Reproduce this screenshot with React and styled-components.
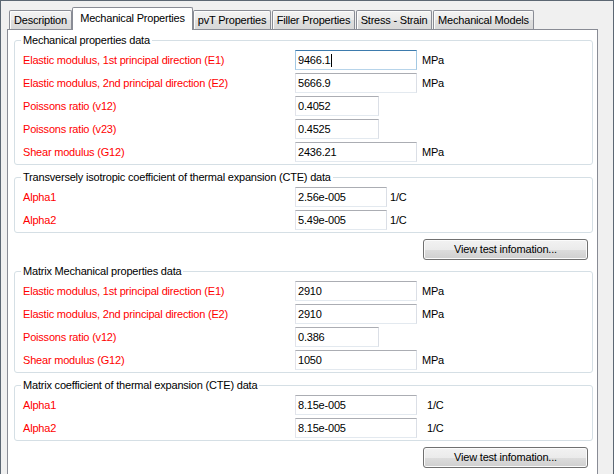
import React from "react";
import styled, { createGlobalStyle } from "styled-components";

const GlobalStyle = createGlobalStyle`
  html, body {
    margin: 0;
    padding: 0;
    background: #f0f0f0;
  }
  body {
    font-family: "Liberation Sans", Arial, sans-serif;
    font-size: 11px;
    letter-spacing: -0.2px;
    color: #000;
  }
`;

const Window = styled.div`
  width: 614px;
  height: 474px;
  box-sizing: border-box;
  border: 1px solid #5c6773;
  border-bottom: none;
  padding: 0 15px 0 6px;
  background: #f0f0f0;
  overflow: hidden;
`;

const TabBar = styled.div`
  display: flex;
  align-items: flex-end;
  height: 28px;
  padding-left: 2px;
  position: relative;
  z-index: 1;
`;

const Tab = styled.div`
  box-sizing: border-box;
  width: ${({ $w }) => $w}px;
  margin-left: ${({ $ml }) => $ml || 0}px;
  height: ${({ $active }) => ($active ? 23 : 19)}px;
  margin-bottom: ${({ $active }) => ($active ? -1 : 0)}px;
  border: 1px solid #898c95;
  border-bottom: none;
  border-radius: 2px 2px 0 0;
  background: ${({ $active }) =>
    $active ? "#ffffff" : "linear-gradient(#f3f3f3, #ebebeb 50%, #dedede 51%, #d8d8d8)"};
  box-shadow: ${({ $active }) => ($active ? "none" : "inset 1px 1px 0 #fcfcfc")};
  text-align: center;
  line-height: ${({ $active }) => ($active ? 20 : 18)}px;
  white-space: nowrap;
  color: #000;
`;

const Panel = styled.div`
  box-sizing: border-box;
  height: 460px;
  border: 1px solid #898c95;
  background: #ffffff;
  padding: 4px 4px 0 6px;
  display: flex;
  flex-direction: column;
`;

const Group = styled.fieldset`
  margin: ${({ $mt }) => $mt || 0}px 0 0 0;
  border: 1px solid #d5dfe5;
  border-radius: 3px;
  padding: 3px 0 2px 8px;
  min-width: 0;
`;

const Legend = styled.legend`
  padding: 0 2px;
  margin-left: -2px;
  line-height: 13px;
  height: 13px;
  color: #000;
`;

const Rows = styled.div`
  display: flex;
  flex-direction: column;
  gap: 3px;
`;

const Row = styled.div`
  display: flex;
  align-items: center;
  height: 20px;
`;

const Label = styled.div`
  width: 272px;
  color: #ff0000;
  white-space: nowrap;
`;

const Field = styled.div`
  box-sizing: border-box;
  width: ${({ $w }) => $w}px;
  height: 20px;
  padding-left: 2px;
  line-height: 18px;
  border: 1px solid;
  border-color: ${({ $focus }) =>
    $focus ? "#3d7bad #a4c9e3 #b7d4ea #a4c9e3" : "#abadb3 #dbdfe6 #e3e9ef #e2e3ea"};
  background: #fff;
  color: #000;
  display: flex;
  align-items: center;
`;

const Caret = styled.span`
  display: inline-block;
  width: 1px;
  height: 13px;
  background: #000;
  margin-left: 1px;
`;

const Unit = styled.div`
  margin-left: ${({ $ml }) => $ml}px;
  color: #000;
`;

const ButtonRow = styled.div`
  display: flex;
  justify-content: flex-end;
  margin: 6px 5px 0 0;
`;

const Button = styled.div`
  box-sizing: border-box;
  width: 165px;
  height: 21px;
  border: 1px solid #707070;
  border-radius: 3px;
  background: linear-gradient(#f2f2f2, #ebebeb 50%, #dddddd 51%, #cfcfcf);
  box-shadow: inset 0 0 0 1px #fbfbfb;
  text-align: center;
  line-height: 19px;
  color: #000;
`;

const tabs = [
  { name: "Description", w: 63 },
  { name: "Mechanical Properties", w: 121, ml: 0, active: true },
  { name: "pvT Properties", w: 78 },
  { name: "Filler Properties", w: 83, ml: 1 },
  { name: "Stress - Strain", w: 76, ml: 1 },
  { name: "Mechanical Models", w: 101, ml: 1 },
];

const groups = [
  {
    title: "Mechanical properties data",
    rows: [
      { label: "Elastic modulus, 1st principal direction (E1)", value: "9466.1", w: 122, unit: "MPa", ml: 5, focus: true },
      { label: "Elastic modulus, 2nd principal direction (E2)", value: "5666.9", w: 122, unit: "MPa", ml: 5 },
      { label: "Poissons ratio (v12)", value: "0.4052", w: 84 },
      { label: "Poissons ratio (v23)", value: "0.4525", w: 84 },
      { label: "Shear modulus (G12)", value: "2436.21", w: 122, unit: "MPa", ml: 5 },
    ],
  },
  {
    title: "Transversely isotropic coefficient of thermal expansion (CTE) data",
    mt: 6,
    rows: [
      { label: "Alpha1", value: "2.56e-005", w: 92, unit: "1/C", ml: 3 },
      { label: "Alpha2", value: "5.49e-005", w: 92, unit: "1/C", ml: 3 },
    ],
    button: true,
  },
  {
    title: "Matrix Mechanical properties data",
    mt: 5,
    rows: [
      { label: "Elastic modulus, 1st principal direction (E1)", value: "2910", w: 122, unit: "MPa", ml: 5 },
      { label: "Elastic modulus, 2nd principal direction (E2)", value: "2910", w: 122, unit: "MPa", ml: 5 },
      { label: "Poissons ratio (v12)", value: "0.386", w: 84 },
      { label: "Shear modulus (G12)", value: "1050", w: 122, unit: "MPa", ml: 5 },
    ],
  },
  {
    title: "Matrix coefficient of thermal expansion (CTE) data",
    mt: 6,
    rows: [
      { label: "Alpha1", value: "8.15e-005", w: 122, unit: "1/C", ml: 10 },
      { label: "Alpha2", value: "8.15e-005", w: 122, unit: "1/C", ml: 10 },
    ],
    button: true,
  },
];

const App = () => {
  return (
    <>
      <GlobalStyle />
      <Window>
        <TabBar>
          {tabs.map((t) => (
            <Tab key={t.name} $w={t.w} $ml={t.ml} $active={t.active}>
              {t.name}
            </Tab>
          ))}
        </TabBar>
        <Panel>
          {groups.map((g) => (
            <React.Fragment key={g.title}>
              <Group $mt={g.mt}>
                <Legend>{g.title}</Legend>
                <Rows>
                  {g.rows.map((r) => (
                    <Row key={r.label}>
                      <Label>{r.label}</Label>
                      <Field $w={r.w} $focus={r.focus}>
                        {r.value}
                        {r.focus && <Caret />}
                      </Field>
                      {r.unit && <Unit $ml={r.ml}>{r.unit}</Unit>}
                    </Row>
                  ))}
                </Rows>
              </Group>
              {g.button && (
                <ButtonRow>
                  <Button>View test infomation...</Button>
                </ButtonRow>
              )}
            </React.Fragment>
          ))}
        </Panel>
      </Window>
    </>
  );
};

export default App;
